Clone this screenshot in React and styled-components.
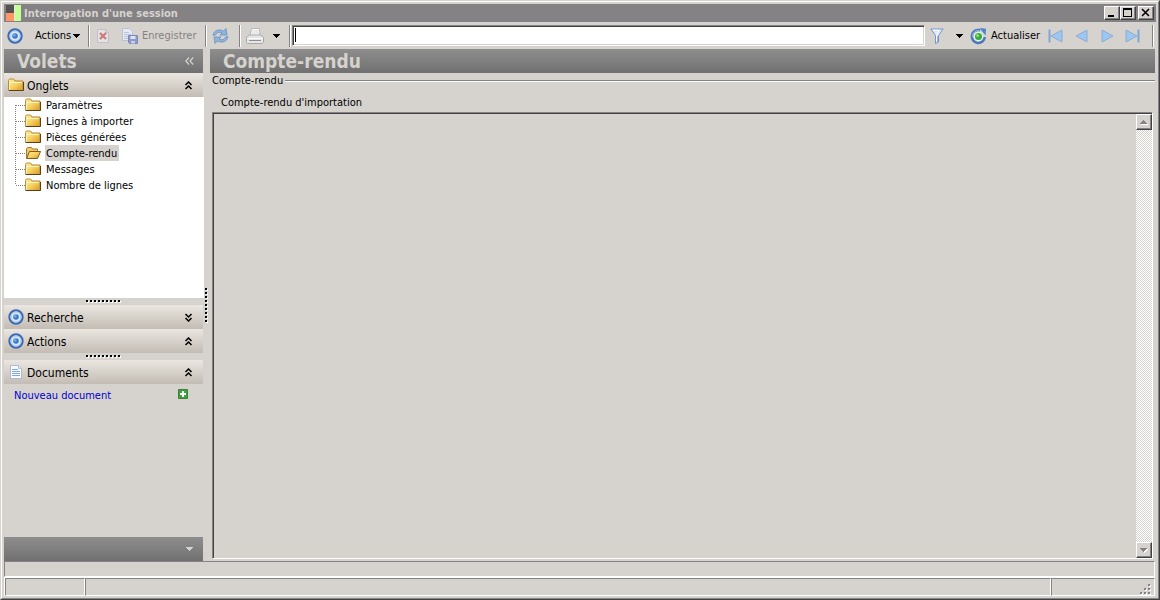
import React from "react";
import styled, { createGlobalStyle, css } from "styled-components";

const face = "#d6d3ce";
const shadow = "#848284";
const dark = "#424142";

const GlobalStyle = createGlobalStyle`
  *, *::before, *::after { box-sizing: border-box; }
  body { margin: 0; background: ${face}; }
  body, button, input, textarea {
    font: 11px/16px "DejaVu Sans Condensed", "DejaVu Sans", sans-serif;
    color: #000;
  }
  button { padding: 0; border: 0; background: none; text-align: left; }
  svg { display: block; flex: none; }
`;

const Frame = styled.div`
  min-height: 100vh;
  display: flex;
  border: 1px solid;
  border-color: ${face} ${dark} ${dark} ${face};
`;

const Window = styled.div`
  flex: 1;
  min-width: 0;
  display: flex;
  flex-direction: column;
  padding: 2px;
  border: 1px solid;
  border-color: #fff ${shadow} ${shadow} #fff;
`;

const TitleBar = styled.header`
  height: 18px;
  display: flex;
  align-items: center;
  gap: 2px;
  padding: 0 2px 0 1px;
  background: ${shadow};
`;

const WindowTitle = styled.h1`
  flex: 1;
  margin: 0;
  padding-top: 1px;
  font-size: 11px;
  line-height: 17px;
  color: ${face};
`;

const raised = css`
  border: 1px solid;
  border-color: #fff ${dark} ${dark} #fff;
  box-shadow: inset -1px -1px ${shadow};
  background: ${face};
`;

const CaptionButton = styled.button`
  ${raised}
  width: 16px;
  height: 14px;
  margin-left: ${(p) => (p.$apart ? 0 : -2)}px;
  display: grid;
  place-items: center;
`;

const Toolbar = styled.div`
  height: 27px;
  display: flex;
  align-items: center;
  padding: 1px 2px 0 0;
`;

const Tool = styled.button`
  width: ${(p) => p.$width}px;
  height: 24px;
  flex: none;
  display: flex;
  align-items: center;
  gap: ${(p) => p.$gap || 4}px;
  padding: 0 0 0 ${(p) => (p.$tight ? 3 : 5)}px;
  white-space: nowrap;
  color: ${(p) => (p.disabled ? shadow : "#000")};
`;

const Separator = styled.span`
  width: 2px;
  height: 22px;
  flex: none;
  border-left: 1px solid ${shadow};
  border-right: 1px solid #fff;
`;

const SearchBox = styled.div`
  position: relative;
  flex: 1;
  min-width: 0;
  display: flex;
  margin: 0 0 2px 1px;

  &::after {
    content: "";
    position: absolute;
    left: 3px;
    top: 3px;
    width: 1px;
    height: 14px;
    background: #000;
  }
`;

const SearchInput = styled.input`
  width: 100%;
  height: 21px;
  padding: 0 4px;
  outline: 0;
  background: #fff;
  border: 1px solid;
  border-color: ${shadow} #fff #fff ${shadow};
  box-shadow: inset 1px 1px ${dark}, inset -1px -1px ${face};
`;

const Body = styled.div`
  flex: 1;
  display: flex;
`;

const Sidebar = styled.aside`
  width: 199px;
  flex: none;
  display: flex;
  flex-direction: column;
`;

const DarkBar = styled.div`
  height: 24px;
  flex: none;
  display: flex;
  align-items: center;
  justify-content: space-between;
  padding: 0 9px 0 13px;
  background: linear-gradient(#8e8e8e, #707070);
`;

const BarTitle = styled.h2`
  margin: 0;
  font-size: 19px;
  line-height: 24px;
  color: ${face};
`;

const SectionHeader = styled.button`
  height: 24px;
  flex: none;
  display: flex;
  align-items: center;
  gap: 3px;
  padding: 0 10px 0 4px;
  font-size: 12px;
  background: linear-gradient(#ebe6e0, #c2bcb4);
`;

const SectionLabel = styled.span`
  flex: 1;
  padding-top: 1px;
`;

const Tree = styled.ul`
  height: 201px;
  flex: none;
  margin: 0 -1px 0 0;
  padding: 0 0 0 11px;
  list-style: none;
  background: #fff;
`;

const TreeItem = styled.li`
  height: 16px;
  display: flex;
  align-items: center;
`;

const Branch = styled.svg`
  width: 10px;
  height: 16px;
  stroke: ${shadow};
  stroke-dasharray: 1 1;
`;

const TreeLink = styled.a`
  height: 16px;
  margin-left: 4px;
  padding: 1px 2px 0 1px;
  line-height: 15px;
  color: #000;
  text-decoration: none;
  background: ${(p) => (p.$selected ? face : "transparent")};
`;

const Splitter = styled.div`
  height: 7px;
  flex: none;
  display: flex;
  align-items: center;
  justify-content: center;
`;

const VerticalSplitter = styled.div`
  width: 7px;
  flex: none;
  display: flex;
  align-items: center;
  justify-content: center;
`;

const DocumentRow = styled.div`
  flex: 1;
  display: flex;
  align-items: flex-start;
  justify-content: space-between;
  padding: 4px 14px 4px 10px;
`;

const DocumentLink = styled.a`
  color: #0000ce;
  text-decoration: none;
`;

const AddButton = styled.button`
  padding-top: 1px;
`;

const Main = styled.main`
  flex: 1;
  min-width: 0;
  display: flex;
  flex-direction: column;
  margin-right: 1px;
`;

const Group = styled.section`
  flex: 1;
  display: flex;
  flex-direction: column;
  padding: 0 2px 2px;
`;

const GroupCaption = styled.h3`
  display: flex;
  align-items: center;
  gap: 2px;
  height: 15px;
  margin: 0 -2px 0 0;
  font-size: 11px;
  font-weight: 400;

  &::after {
    content: "";
    flex: 1;
    height: 2px;
    background: linear-gradient(${shadow} 50%, #fff 50%);
  }
`;

const ReportLabel = styled.label`
  padding: 7px 9px 1px;
`;

const ReportFrame = styled.div`
  flex: 1;
  display: flex;
  border: 1px solid;
  border-color: ${shadow} #fff #fff ${shadow};
  box-shadow: inset 1px 1px ${dark};
  padding: 1px 0 0 1px;
`;

const ReportText = styled.textarea`
  flex: 1;
  min-width: 0;
  border: 0;
  outline: 0;
  resize: none;
  overflow: hidden;
  background: transparent;
`;

const ScrollTrack = styled.div`
  width: 16px;
  display: flex;
  flex-direction: column;
  justify-content: space-between;
  background: repeating-conic-gradient(#fff 0 25%, ${face} 0 50%) 0 0 / 2px 2px;
`;

const ScrollButton = styled.button`
  ${raised}
  width: 16px;
  height: 16px;
  display: grid;
  place-items: center;
`;

const Footer = styled.footer`
  flex: none;
  margin-right: 1px;
`;

const MessageStrip = styled.div`
  height: 16px;
  border: 1px solid;
  border-color: ${shadow} #fff #fff ${shadow};
`;

const StatusBar = styled.div`
  height: 19px;
  display: flex;
  border-top: 1px solid #fff;
  border-left: 1px solid #fff;
`;

const StatusCell = styled.div`
  width: ${(p) => (p.$width ? p.$width + "px" : "auto")};
  flex: ${(p) => (p.$width ? "none" : 1)};
  display: flex;
  align-items: flex-end;
  justify-content: flex-end;
  border: 1px solid;
  border-color: ${shadow} #fff #fff ${shadow};
`;

function TargetIcon() {
  return (
    <svg width="16" height="16" viewBox="0 0 16 16">
      <circle cx="8" cy="8" r="6.7" fill="#dce8f5" stroke="#3b69b3" strokeWidth="2" />
      <circle cx="8" cy="8" r="5" fill="none" stroke="#9cbce4" strokeWidth=".8" />
      <circle cx="8" cy="8" r="2.8" fill="#3679c9" />
      <circle cx="7.3" cy="7.3" r="1.2" fill="#74b1ec" />
    </svg>
  );
}

function FolderIcon({ open }) {
  return (
    <svg width="16" height="16" viewBox="0 0 16 16">
      <defs>
        <linearGradient id="folderFill" x1="0" y1="0" x2="1" y2="1">
          <stop offset="0" stopColor="#fff0a0" />
          <stop offset=".5" stopColor="#f8d060" />
          <stop offset="1" stopColor="#d39a22" />
        </linearGradient>
      </defs>
      {open ? (
        <>
          <path d="M1.500 13V3.500l1-1h4l1 1.500h5v9z" fill="#efc862" stroke="#a87a2b" />
          <path d="m1.500 13.500 3-7h11l-3 7z" fill="url(#folderFill)" stroke="#80591b" />
        </>
      ) : (
        <>
          <path d="M.5 13.500v-10l1-1.500h4l1.500 2h8v9.500z" fill="url(#folderFill)" stroke="#b88a38" />
          <path d="M1 13.500h14.500V5" fill="none" stroke="#5d3f18" />
          <path d="M1.500 12.500v-7H14" fill="none" stroke="#fff6c4" />
        </>
      )}
    </svg>
  );
}

function DocumentIcon() {
  return (
    <svg width="16" height="16" viewBox="0 0 16 16">
      <path d="M2.500 1.500h8l3 3v10h-11z" fill="#fafcff" stroke="#a9badb" />
      <path d="M10.500 1.500v3h3" fill="#dce5f3" stroke="#b4c4dc" />
      <path d="M4 5.500h6M4 7.500h8M4 9.500h8M4 11.500h8" stroke="#7fa8e6" />
    </svg>
  );
}

function DeleteIcon() {
  return (
    <svg width="16" height="16" viewBox="0 0 16 16">
      <path d="M2.500 1.500h8l3 3v10h-11z" fill="#e3e2e4" stroke="#c0c0c6" />
      <path d="M10.500 1.500v3h3" fill="none" stroke="#c0c0c6" />
      <path d="m5 5 6 6m0-6-6 6" stroke="#cf7a7d" strokeWidth="2.200" />
    </svg>
  );
}

function SaveIcon() {
  return (
    <svg width="16" height="16" viewBox="0 0 16 16">
      <path d="M.5.5h7l3 3v9H.5z" fill="#e6e9f0" stroke="#b9c1d2" />
      <path d="M2 4.500h5M2 6.500h7M2 8.500h5M2 10.500h4" stroke="#b3c3e0" />
      <path d="M6.500 7.500h9v8h-8l-1-1z" fill="#8f98cb" stroke="#7f88bd" />
      <path d="M8.500 8h5v3h-5z" fill="#dfe2ef" />
      <path d="M9 13h4v2.500H9z" fill="#c9cee4" />
    </svg>
  );
}

function SyncIcon() {
  return (
    <svg width="17" height="16" viewBox="0 0 17 16">
      <path
        d="M1 7.500C1.500 2.500 7 .5 11.500 3L14 .5l1 6.500H8l2-2C7.500 3.500 4.500 4.500 3.500 7z"
        fill="#8fb4dc"
        stroke="#6690c2"
        strokeWidth=".8"
      />
      <path
        d="M16 8.500c-.5 5-6 7-10.500 4.500L3 15.500 2 9h7l-2 2c2.500 1.500 5.500.5 6.500-2z"
        fill="#8fb4dc"
        stroke="#6690c2"
        strokeWidth=".8"
      />
    </svg>
  );
}

function PrinterIcon() {
  return (
    <svg width="18" height="18" viewBox="0 0 18 18">
      <path d="M4 9 5.500 1.500h8L14 9z" fill="#f6f6f6" stroke="#b9b9b9" />
      <path d="M6.500 4h6M6 6h7" stroke="#dedede" />
      <path d="M.5 10.500 3.500 8h11l3 2.500v5l-1 1H1.500l-1-1z" fill="#e6e6e6" stroke="#a8a8a8" />
      <path d="M1 11.500h16" stroke="#fafafa" />
      <path d="M3 13.500h12" stroke="#8e8e8e" />
    </svg>
  );
}

function FilterIcon() {
  return (
    <svg width="15" height="16" viewBox="0 0 15 16">
      <path d="M.8 1h12.400L8.500 7.500v6.500l-3 1.500v-8z" fill="#dbe8fb" stroke="#7795d0" />
      <path d="M3 2.200h6L6.800 7v6" fill="none" stroke="#fff" />
      <path d="M8 8v6" stroke="#6387c7" />
    </svg>
  );
}

function RefreshIcon() {
  return (
    <svg width="17" height="17" viewBox="0 0 17 17">
      <path d="M10 2.200A6.500 6.500 0 1 0 14.800 9" fill="none" stroke="#4a78be" strokeWidth="2.600" />
      <path d="M9 2.500a6 6 0 0 0-6.500 6" fill="none" stroke="#9cc0ea" strokeWidth="1" />
      <circle cx="8.500" cy="8.500" r="4.800" fill="#e6efe9" />
      <path d="M9.500 0 16 .8 15.500 7.500z" fill="#4d83c7" />
      <circle cx="8.500" cy="8.500" r="3.500" fill="#37a93d" />
      <circle cx="7.600" cy="7.600" r="1.500" fill="#8be07b" />
    </svg>
  );
}

function NavIcon({ back, bar }) {
  const width = bar ? 16 : 13;
  return (
    <svg width={width} height="16" viewBox={`0 0 ${width} 16`}>
      <g transform={back ? `translate(${width} 0) scale(-1 1)` : undefined}>
        <path d="M1 2v12L12 8z" fill="#9bc8f3" stroke="#8fabd0" />
        {bar && <path d="M13.500 1.500v13" stroke="#7fa5d8" strokeWidth="2" />}
      </g>
    </svg>
  );
}

function Arrow({ up, color = "#000", light }) {
  return (
    <svg width="8" height="5" viewBox="0 0 8 5" shapeRendering="crispEdges">
      {light && <path d={up ? "M1 5h7v-1H1z" : "m1 1h7L4.500 5z"} fill="#fff" />}
      <path d={up ? "M0 4h7L3.500 0z" : "M0 0h7L3.500 4z"} fill={color} />
    </svg>
  );
}

function Chevrons({ down }) {
  const d = down ? "m1 1 3 3 3-3M1 5l3 3 3-3" : "m1 4 3-3 3 3M1 8l3-3 3 3";
  return (
    <svg width="9" height="9" viewBox="0 0 8 9">
      <path d={d} fill="none" stroke="#000" strokeWidth="1.500" />
    </svg>
  );
}

function CollapseIcon() {
  return (
    <svg width="9" height="8" viewBox="0 0 9 8">
      <path d="M4 .5.8 4 4 7.500M8.200.5 5 4l3.200 3.500" fill="none" stroke={face} strokeWidth="1.200" />
    </svg>
  );
}

function Grip({ vertical }) {
  const dots = Array.from({ length: 9 }, (_, i) => i * 4);
  return (
    <svg
      width={vertical ? 3 : 35}
      height={vertical ? 35 : 3}
      shapeRendering="crispEdges"
    >
      {dots.map((n) => (
        <g key={n} transform={vertical ? `translate(0 ${n})` : `translate(${n} 0)`}>
          <path d="M1 1h2v2H1z" fill="#fff" />
          <path d="M0 0h2v2H0z" fill="#000" />
        </g>
      ))}
    </svg>
  );
}

function SizeGrip() {
  const dots = [[8, 0], [4, 4], [8, 4], [0, 8], [4, 8], [8, 8]];
  return (
    <svg width="14" height="11" shapeRendering="crispEdges">
      {dots.map(([x, y]) => (
        <g key={`${x}-${y}`}>
          <path d={`M${x + 1} ${y + 1}h2v2h-2z`} fill="#fff" />
          <path d={`M${x} ${y}h2v2h-2z`} fill={shadow} />
        </g>
      ))}
    </svg>
  );
}

function AppLogo() {
  return (
    <svg width="17" height="17" viewBox="0 0 17 17" shapeRendering="crispEdges">
      <path d="M1 0h8v8H1z" fill="#555351" />
      <path d="M1 8h8v8H1z" fill="#ff9663" />
      <path d="M9 0h7v16H9z" fill="#c4ff94" />
      <path d="M9 0v16" stroke="#e9e9df" />
    </svg>
  );
}

function AddIcon() {
  return (
    <svg width="11" height="11" viewBox="0 0 11 11">
      <path d="M.5.5h9v9h-9z" fill="#3ea33c" stroke="#3b7f37" />
      <path d="M5 2v6M2 5h6" stroke="#fff" strokeWidth="2" />
    </svg>
  );
}

const tabs = [
  "Paramètres",
  "Lignes à importer",
  "Pièces générées",
  "Compte-rendu",
  "Messages",
  "Nombre de lignes",
];

function Section({ icon, label, collapsed }) {
  return (
    <SectionHeader type="button" aria-expanded={!collapsed}>
      {icon}
      <SectionLabel>{label}</SectionLabel>
      <Chevrons down={collapsed} />
    </SectionHeader>
  );
}

export default function App() {
  return (
    <Frame>
      <GlobalStyle />
      <Window>
        <TitleBar>
          <AppLogo />
          <WindowTitle>Interrogation d'une session</WindowTitle>
          <CaptionButton type="button" aria-label="Réduire">
            <svg width="12" height="10" shapeRendering="crispEdges"><path d="M2 7h6v2H2z" /></svg>
          </CaptionButton>
          <CaptionButton type="button" aria-label="Agrandir">
            <svg width="12" height="10" shapeRendering="crispEdges"><path d="M1 0h9v9H1zM2 2v6h7V2z" fillRule="evenodd" /></svg>
          </CaptionButton>
          <CaptionButton type="button" aria-label="Fermer" $apart>
            <svg width="12" height="10"><path d="m2 1 7 7m0-7-7 7" stroke="#000" strokeWidth="1.600" /></svg>
          </CaptionButton>
        </TitleBar>

        <Toolbar role="toolbar">
          <Tool type="button" aria-label="Menu" $width={26} $tight><TargetIcon /></Tool>
          <Tool type="button" $width={58} $gap={2}>Actions<Arrow /></Tool>
          <Separator />
          <Tool type="button" aria-label="Supprimer" disabled $width={27}><DeleteIcon /></Tool>
          <Tool type="button" disabled $width={88}><SaveIcon />Enregistrer</Tool>
          <Separator />
          <Tool type="button" aria-label="Synchroniser" $width={32}><SyncIcon /></Tool>
          <Separator />
          <Tool type="button" aria-label="Imprimer" $width={27}><PrinterIcon /></Tool>
          <Tool type="button" aria-label="Options d'impression" $width={21}><Arrow /></Tool>
          <Separator />
          <SearchBox><SearchInput type="text" aria-label="Rechercher" /></SearchBox>
          <Tool type="button" aria-label="Filtrer" $width={26}><FilterIcon /></Tool>
          <Tool type="button" aria-label="Options du filtre" $width={14}><Arrow /></Tool>
          <Tool type="button" $width={77}><RefreshIcon />Actualiser</Tool>
          <Tool type="button" aria-label="Premier" $width={28}><NavIcon back bar /></Tool>
          <Tool type="button" aria-label="Précédent" $width={26}><NavIcon back /></Tool>
          <Tool type="button" aria-label="Suivant" $width={24}><NavIcon /></Tool>
          <Tool type="button" aria-label="Dernier" $width={32}><NavIcon bar /></Tool>
          <Separator />
        </Toolbar>

        <Body>
          <Sidebar>
            <DarkBar>
              <BarTitle>Volets</BarTitle>
              <button type="button" aria-label="Replier les volets"><CollapseIcon /></button>
            </DarkBar>
            <Section icon={<FolderIcon />} label="Onglets" />
            <Tree>
              {tabs.map((name, i) => (
                <TreeItem key={name}>
                  <Branch aria-hidden="true">
                    <path d={`M.5 ${i ? 0 : 8}V${i < tabs.length - 1 ? 16 : 8}M1 8.5h9`} fill="none" />
                  </Branch>
                  <FolderIcon open={name === "Compte-rendu"} />
                  <TreeLink href="#" $selected={name === "Compte-rendu"}>{name}</TreeLink>
                </TreeItem>
              ))}
            </Tree>
            <Splitter><Grip /></Splitter>
            <Section icon={<TargetIcon />} label="Recherche" collapsed />
            <Section icon={<TargetIcon />} label="Actions" />
            <Splitter><Grip /></Splitter>
            <Section icon={<DocumentIcon />} label="Documents" />
            <DocumentRow>
              <DocumentLink href="#">Nouveau document</DocumentLink>
              <AddButton type="button" aria-label="Ajouter un document"><AddIcon /></AddButton>
            </DocumentRow>
            <DarkBar>
              <span />
              <button type="button" aria-label="Configurer les volets"><Arrow color={face} /></button>
            </DarkBar>
          </Sidebar>
          <VerticalSplitter><Grip vertical /></VerticalSplitter>
          <Main>
            <DarkBar><BarTitle>Compte-rendu</BarTitle></DarkBar>
            <Group>
              <GroupCaption>Compte-rendu</GroupCaption>
              <ReportLabel htmlFor="report">Compte-rendu d'importation</ReportLabel>
              <ReportFrame>
                <ReportText id="report" readOnly />
                <ScrollTrack>
                  <ScrollButton type="button" aria-label="Défiler vers le haut"><Arrow up light color={shadow} /></ScrollButton>
                  <ScrollButton type="button" aria-label="Défiler vers le bas"><Arrow light color={shadow} /></ScrollButton>
                </ScrollTrack>
              </ReportFrame>
            </Group>
          </Main>
        </Body>

        <Footer>
          <MessageStrip />
          <StatusBar>
            <StatusCell $width={80} />
            <StatusCell />
            <StatusCell $width={104}><SizeGrip /></StatusCell>
          </StatusBar>
        </Footer>
      </Window>
    </Frame>
  );
}
